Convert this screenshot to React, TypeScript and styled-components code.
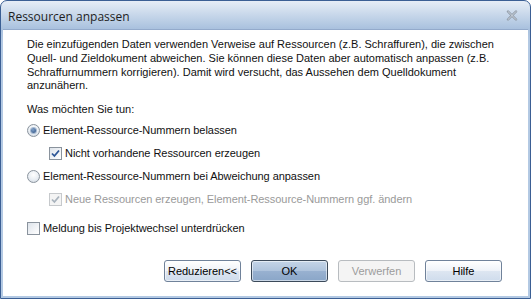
import React from "react";
import styled, { createGlobalStyle } from "styled-components";

const Global = createGlobalStyle`
  html, body { margin: 0; padding: 0; background: #fff; overflow: hidden; }
  * { box-sizing: border-box; }
`;

const Window = styled.div`
  width: 531px;
  height: 299px;
  border: 1px solid #3b5f94;
  border-radius: 7px 7px 0 0;
  background: linear-gradient(#e6edf6 0px, #c7d7ea 14px, #a9c1de 28px, #b3c9e3 40px, #b3c9e3 100%);
  padding: 0 2px 2px 2px;
  display: flex;
  flex-direction: column;
  font-family: "Liberation Sans", Arial, sans-serif;
`;

const TitleBar = styled.div`
  height: 28px;
  display: flex;
  align-items: center;
  justify-content: space-between;
  padding: 0 10px 0 5px;
`;

const Title = styled.span`
  font-family: "Open Sans", "Liberation Sans", sans-serif;
  font-size: 12px;
  color: #1e1e1e;
  margin-top: 2px;
`;

const Client = styled.div`
  flex: 1;
  background: #fff;
  border-top: 1px solid #93aacb;
  padding: 8px 24px 0 24px;
  display: flex;
  flex-direction: column;
  font-size: 11px;
  color: #111;
`;

const Para = styled.p`
  margin: 0;
  line-height: 13.8px;
  width: 480px;
`;

const Question = styled.div`
  margin-top: 9px;
  line-height: 14px;
`;

const Row = styled.label<{ $indent?: number; $top?: number; $disabled?: boolean }>`
  display: flex;
  align-items: center;
  gap: 3px;
  height: 16px;
  margin-top: ${(p) => p.$top ?? 7}px;
  margin-left: ${(p) => p.$indent ?? 0}px;
  color: ${(p) => (p.$disabled ? "#9a9a9a" : "#111")};
  letter-spacing: -0.05px;
`;

const RadioCircle = styled.span<{ $checked?: boolean }>`
  width: 13px;
  height: 13px;
  border-radius: 50%;
  border: 1px solid #8a939d;
  background: radial-gradient(circle at 50% 35%, #ffffff 0%, #e9eef3 55%, #c9d1da 100%);
  display: flex;
  align-items: center;
  justify-content: center;
  &::after {
    content: "";
    display: ${(p) => (p.$checked ? "block" : "none")};
    width: 5px;
    height: 5px;
    border-radius: 50%;
    background: radial-gradient(circle at 40% 35%, #7fa0c8, #2a4e80);
    box-shadow: 0 0 0 1px #a7bad2;
  }
`;

const CheckBox = styled.span<{ $disabled?: boolean }>`
  width: 13px;
  height: 13px;
  border: 1px solid ${(p) => (p.$disabled ? "#c6c9cc" : "#8a939d")};
  background: ${(p) =>
    p.$disabled
      ? "#f4f4f4"
      : "linear-gradient(135deg, #dde3ea 0%, #f2f4f7 60%, #ffffff 100%)"};
  display: flex;
  align-items: center;
  justify-content: center;
`;

const Check = ({ color }: { color: string }) => (
  <svg width="9" height="9" viewBox="0 0 9 9">
    <path d="M1 4.5 L3.4 7 L8 1.5" fill="none" stroke={color} strokeWidth="1.8" />
  </svg>
);

const Buttons = styled.div`
  margin-top: auto;
  margin-bottom: 14px;
  margin-right: 2px;
  display: flex;
  justify-content: flex-end;
  gap: 10px;
`;

const Button = styled.button<{ $variant?: "default" | "disabled" | "normal" }>`
  width: 77px;
  height: 22px;
  padding: 0;
  font-family: "Liberation Sans", Arial, sans-serif;
  font-size: 11px;
  border-radius: 3px;
  border: 1px solid
    ${(p) => (p.$variant === "default" ? "#3c4a5a" : p.$variant === "disabled" ? "#b8bcc0" : "#70829a")};
  color: ${(p) => (p.$variant === "disabled" ? "#9c9c9c" : "#000")};
  background: ${(p) =>
    p.$variant === "default"
      ? "linear-gradient(#c5d5e8 0%, #aec3dc 50%, #98b1d0 51%, #8aa6c8 100%)"
      : p.$variant === "disabled"
      ? "#f4f4f4"
      : "linear-gradient(#ffffff 0%, #eef2f8 50%, #dde6f1 51%, #cfdcec 100%)"};
  box-shadow: ${(p) =>
    p.$variant === "disabled" ? "none" : "inset 0 0 0 1px rgba(255,255,255,0.55)"};
`;

const Close = () => (
  <svg width="12" height="11" viewBox="0 0 12 11">
    <path d="M2 1.5 L10 9.5 M10 1.5 L2 9.5" stroke="#8e99a6" strokeWidth="2.4" strokeLinecap="round" />
    <path d="M2 1.5 L10 9.5 M10 1.5 L2 9.5" stroke="#d6dde5" strokeWidth="0.9" strokeLinecap="round" />
  </svg>
);

export default function App() {
  return (
    <>
      <Global />
      <Window>
        <TitleBar>
          <Title>Ressourcen anpassen</Title>
          <Close />
        </TitleBar>
        <Client>
          <Para>
            Die einzufügenden Daten verwenden Verweise auf Ressourcen (z.B. Schraffuren), die zwischen
            Quell- und Zieldokument abweichen. Sie können diese Daten aber automatisch anpassen (z.B.
            Schraffurnummern korrigieren). Damit wird versucht, das Aussehen dem Quelldokument
            anzunähern.
          </Para>
          <Question>Was möchten Sie tun:</Question>
          <Row $top={6}>
            <RadioCircle $checked />
            Element-Ressource-Nummern belassen
          </Row>
          <Row $indent={22}>
            <CheckBox>
              <Check color="#2c5596" />
            </CheckBox>
            Nicht vorhandene Ressourcen erzeugen
          </Row>
          <Row>
            <RadioCircle />
            Element-Ressource-Nummern bei Abweichung anpassen
          </Row>
          <Row $indent={22} $disabled>
            <CheckBox $disabled>
              <Check color="#a9b3bd" />
            </CheckBox>
            Neue Ressourcen erzeugen, Element-Ressource-Nummern ggf. ändern
          </Row>
          <Row $top={13}>
            <CheckBox />
            Meldung bis Projektwechsel unterdrücken
          </Row>
          <Buttons>
            <Button $variant="normal">Reduzieren&lt;&lt;</Button>
            <Button $variant="default">OK</Button>
            <Button $variant="disabled">Verwerfen</Button>
            <Button $variant="normal">Hilfe</Button>
          </Buttons>
        </Client>
      </Window>
    </>
  );
}
